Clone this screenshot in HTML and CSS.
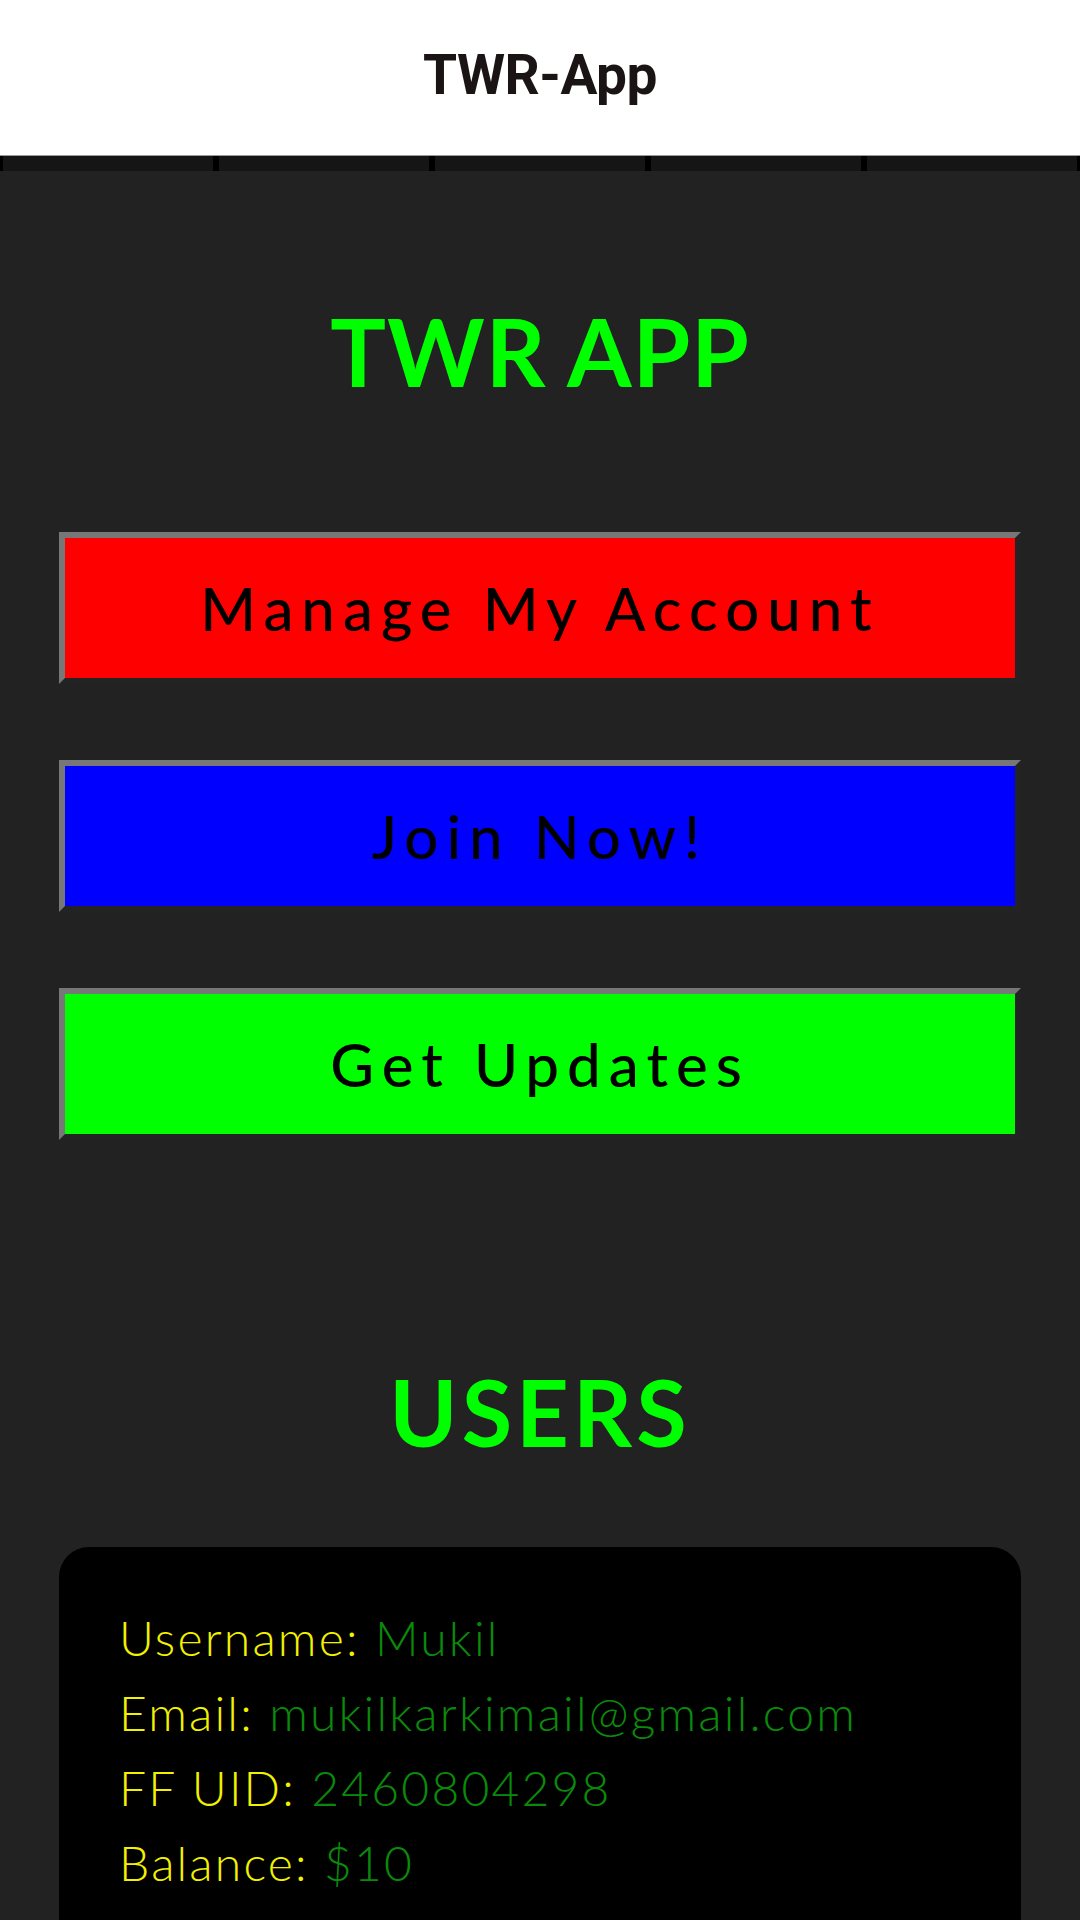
FILE: index.html
```html
<!DOCTYPE html>
<html lang="en">
<head>
    <meta charset="UTF-8">
    <meta name="viewport" content="width=device-width, initial-scale=1.0">
    <title>TWR-App</title>
    <link rel="stylesheet" href="styles.css">
</head>
<body>
    <header class="app-bar">
        <span class="app-title">TWR-App</span>
    </header>
    <nav class="tab-strip">
        <span class="tab"></span>
        <span class="tab"></span>
        <span class="tab"></span>
        <span class="tab"></span>
        <span class="tab"></span>
    </nav>
    <main class="content">
        <h1 class="title">TWR APP</h1>

        <div class="actions">
            <button class="big-btn btn-red">Manage My Account</button>
            <button class="big-btn btn-blue">Join Now!</button>
            <button class="big-btn btn-green">Get Updates</button>
        </div>

        <h2 class="users-title">USERS</h2>

        <div class="user-card">
            <p class="row"><span class="label">Username:</span> <span class="value">Mukil</span></p>
            <p class="row"><span class="label">Email:</span> <span class="value">mukilkarkimail@gmail.com</span></p>
            <p class="row"><span class="label">FF UID:</span> <span class="value">2460804298</span></p>
            <p class="row"><span class="label">Balance:</span> <span class="value">$10</span></p>
        </div>
    </main>
</body>
</html>
```

FILE: styles.css
```css
html, body {
    margin: 0;
    padding: 0;
}
body {
    width: 1080px;
    height: 1920px;
    overflow: hidden;
    background-color: #222222;
    font-family: "Lato", "Noto Sans", sans-serif;
}
.app-bar {
    height: 149px;
    padding-bottom: 6px;
    background: white;
    border-bottom: 1px solid #9a9a9a;
    display: flex;
    align-items: center;
    justify-content: center;
}
.app-title {
    font-family: "Roboto", "Liberation Sans", sans-serif;
    font-weight: 700;
    font-size: 55px;
    color: #1a1414;
    letter-spacing: -0.5px;
}
.tab-strip {
    display: flex;
    height: 15px;
}
.tab {
    flex: 1;
    background: #151515;
    border-left: 3px solid #000;
    border-right: 3px solid #000;
}
.content {
    display: flex;
    flex-direction: column;
    align-items: center;
    padding: 0 59px;
}
.title {
    margin: 130px 0 0;
    font-size: 93px;
    line-height: 100px;
    font-weight: 700;
    color: #00ff00;
    letter-spacing: 1px;
}
.actions {
    margin-top: 131px;
    width: 100%;
    display: flex;
    flex-direction: column;
    gap: 76px;
}
.big-btn {
    box-sizing: border-box;
    width: 100%;
    height: 152px;
    border-style: solid;
    border-width: 6px;
    border-color: #777777 #232323 #232323 #777777;
    font-family: "Lato", "Noto Sans", sans-serif;
    font-size: 60px;
    font-weight: 500;
    letter-spacing: 8px;
    color: #000;
    padding: 0;
}
.btn-red {
    background-color: #ff0000;
}
.btn-blue {
    background-color: #0000ff;
}
.btn-green {
    background-color: #00ff00;
}
.users-title {
    margin: 222px 0 0;
    font-size: 92px;
    line-height: 100px;
    font-weight: 700;
    color: #00ff00;
    letter-spacing: 4px;
}
.user-card {
    box-sizing: border-box;
    margin-top: 85px;
    width: 100%;
    background: #000;
    border-radius: 30px;
    padding: 53px 60px 60px;
}
.row {
    margin: 0;
    font-size: 48px;
    font-weight: 300;
    line-height: 75px;
    letter-spacing: 2.2px;
}
.label {
    color: #f2f200;
}
.value {
    color: #0a8a0a;
}
```
